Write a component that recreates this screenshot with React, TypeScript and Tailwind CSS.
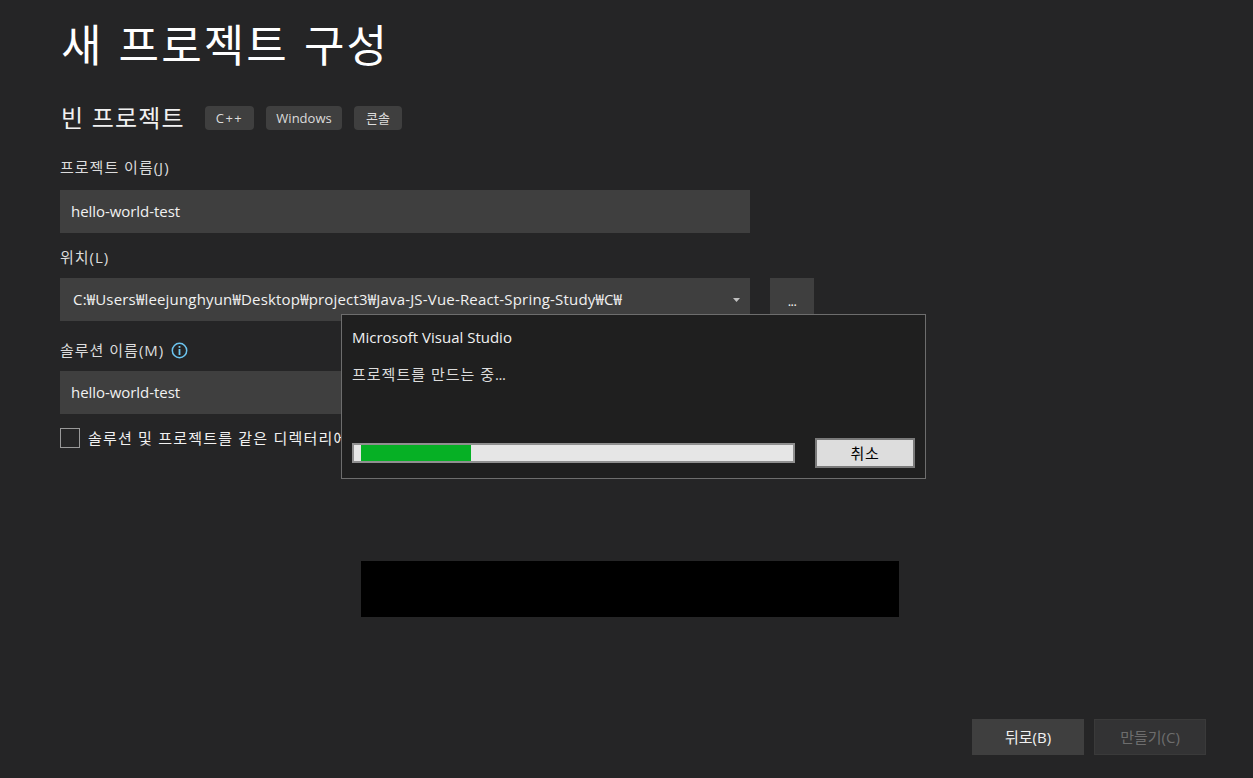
import React from "react";

const FONT = "font-['Open_Sans','Noto_Sans_CJK_KR',sans-serif]";

function Field({ children }: { children: React.ReactNode }) {
  return (
    <div className="flex h-[43px] w-[690px] items-center bg-[#3f3f3f] pl-[11px] text-[15px] tracking-[-0.05px] text-[#f1f1f1]">
      {children}
    </div>
  );
}

function Label({ children, className = "" }: { children: React.ReactNode; className?: string }) {
  return <div className={`flex h-[20px] items-center text-[15px] tracking-[1px] text-[#dcdcdc] ${className}`}>{children}</div>;
}

function Tag({ children, w, extra = "" }: { children: React.ReactNode; w: string; extra?: string }) {
  return (
    <span className={`flex h-[24px] items-center justify-center rounded-[4px] bg-[#3f3f3f] pt-[1px] text-[13px] text-[#dcdcdc] ${w} ${extra}`}>
      {children}
    </span>
  );
}

export default function App() {
  return (
    <div className={`${FONT} relative flex h-[778px] w-[1253px] flex-col overflow-hidden bg-[#252526] pl-[60px]`}>
      <h1 className="mt-[16px] h-[58px] pl-[1px] text-[44px] leading-[58px] tracking-[2.1px] text-white [word-spacing:1.5px]">새 프로젝트 구성</h1>
      <div className="mt-[31px] flex h-[26px] items-center">
        <h2 className="w-[145px] pl-[1px] text-[24px] tracking-[1.2px] whitespace-nowrap text-[#f1f1f1]">빈 프로젝트</h2>
        <div className="flex gap-[12px]">
          <Tag w="w-[49px]" extra="tracking-[1.5px]">C++</Tag>
          <Tag w="w-[76px]">Windows</Tag>
          <Tag w="w-[48px]">콘솔</Tag>
        </div>
      </div>
      <Label className="mt-[26px]">프로젝트 이름(J)</Label>
      <div className="mt-[13px]">
        <Field>hello-world-test</Field>
      </div>
      <Label className="mt-[14px]">위치(L)</Label>
      <div className="mt-[11px] flex gap-[20px]">
        <div className="flex h-[43px] w-[690px] items-center justify-between bg-[#3f3f3f] pl-[13px] pr-[10px] text-[15px] tracking-[0.18px] text-[#f1f1f1]">
          <span>C:₩Users₩leejunghyun₩Desktop₩project3₩Java-JS-Vue-React-Spring-Study₩C₩</span>
          <svg width="7" height="4" viewBox="0 0 7 4"><path d="M0 0h7L3.5 4z" fill="#c0c0c0" /></svg>
        </div>
        <div className="flex h-[43px] w-[44px] items-center justify-center bg-[#3f3f3f] pt-[5px] text-[13px] tracking-[-0.5px] text-[#f1f1f1]">...</div>
      </div>
      <div className="mt-[19px] flex h-[20px] items-center gap-[7px]">
        <Label>솔루션 이름(M)</Label>
        <svg width="17" height="17" viewBox="0 0 17 17" fill="none">
          <circle cx="8.5" cy="8.5" r="7.2" stroke="#6cc5f0" strokeWidth="1.5" />
          <rect x="7.6" y="7" width="1.8" height="6" fill="#6cc5f0" />
          <rect x="7.6" y="4" width="1.8" height="1.8" fill="#6cc5f0" />
        </svg>
      </div>
      <div className="mt-[11px]">
        <Field>hello-world-test</Field>
      </div>
      <div className="mt-[14px] flex h-[20px] items-center gap-[8px]">
        <div className="h-[20px] w-[20px] border border-[#999999]" />
        <span className="pt-[1px] text-[15px] tracking-[1.2px] whitespace-nowrap text-[#f1f1f1]">솔루션 및 프로젝트를 같은 디렉터리에 배치(D)</span>
      </div>

      <div className="mt-auto mb-[23px] mr-[47px] flex justify-end gap-[10px]">
        <div className="flex h-[36px] w-[112px] items-center justify-center bg-[#3f3f3f] text-[15px] text-[#f1f1f1]">뒤로(B)</div>
        <div className="flex h-[36px] w-[112px] items-center justify-center border border-[#3a3a3a] bg-[#333334] text-[15px] text-[#6d6d6d]">만들기(C)</div>
      </div>

      {/* progress dialog */}
      <div className="absolute left-[341px] top-[314px] flex h-[165px] w-[585px] flex-col border border-[#6d6d6d] bg-[#1f1f1f] px-[10px]">
        <div className="mt-[12px] h-[20px] text-[15px] leading-[20px] text-[#f1f1f1]">Microsoft Visual Studio</div>
        <div className="mt-[17px] h-[20px] text-[15px] leading-[20px] tracking-[1px] text-[#dcdcdc]">
          프로젝트를 만드는 중<span className="tracking-[-0.5px]">...</span>
        </div>
        <div className="mt-auto mb-[10px] flex items-center justify-between">
          <div className="flex h-[20px] w-[443px] border-2 border-[#8f8f8f] bg-[#e6e6e6]">
            <div className="ml-[7px] w-[110px] bg-[#06b025]" />
          </div>
          <div className="flex h-[30px] w-[100px] items-center justify-center border-2 border-[#7a7a7a] bg-[#dddddd] text-[15px] tracking-[0.7px] text-black">취소</div>
        </div>
      </div>

      {/* redaction block */}
      <div className="absolute left-[361px] top-[561px] h-[56px] w-[538px] bg-black" />
    </div>
  );
}
